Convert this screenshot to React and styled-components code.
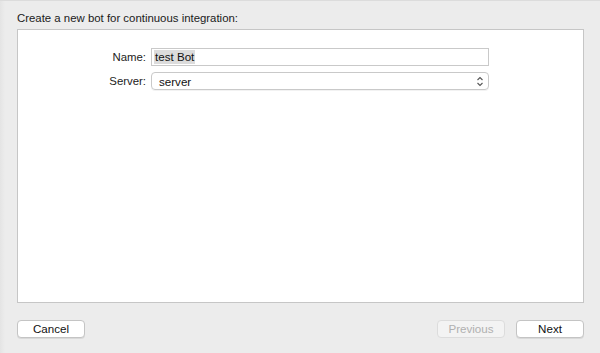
import React from "react";
import styled, { createGlobalStyle } from "styled-components";

const Global = createGlobalStyle`
  html, body {
    margin: 0;
    padding: 0;
  }
  body {
    background: #ececec;
    font-family: "Liberation Sans", Arial, sans-serif;
  }
`;

function App() {
  return (
    <Sheet>
      <Global />
      <Title>Create a new bot for continuous integration:</Title>
      <Panel>
        <Form>
          <Label>Name:</Label>
          <TextField>
            <Selected>test Bot</Selected>
          </TextField>
          <Label>Server:</Label>
          <Select>
            <span>server</span>
            <svg width="8" height="11" viewBox="0 0 8 11">
              <path
                d="M1.5 4 L4 1.5 L6.5 4 M1.5 7 L4 9.5 L6.5 7"
                fill="none"
                stroke="#555"
                strokeWidth="1.1"
              />
            </svg>
          </Select>
        </Form>
      </Panel>
      <Footer>
        <Button>Cancel</Button>
        <Spacer />
        <Button disabled>Previous</Button>
        <Button>Next</Button>
      </Footer>
    </Sheet>
  );
}

const Sheet = styled.div`
  width: 600px;
  height: 353px;
  box-sizing: border-box;
  padding: 10px 16px 0 17px;
  display: flex;
  flex-direction: column;
  background: linear-gradient(to right, #e4e4e4 0, #ececec 5px);
  border-top: 1px solid #dcdcdc;
`;

const Title = styled.div`
  font-size: 11.4px;
  color: #1a1a1a;
  height: 14px;
  line-height: 14px;
  margin-bottom: 4px;
`;

const Panel = styled.div`
  height: 274px;
  box-sizing: border-box;
  background: #ffffff;
  border: 1px solid #c6c6c6;
`;

const Form = styled.div`
  display: grid;
  grid-template-columns: 128px 338px;
  column-gap: 5px;
  row-gap: 6px;
  padding-top: 18px;
  align-items: center;
`;

const Label = styled.div`
  font-size: 11.4px;
  color: #222;
  text-align: right;
`;

const TextField = styled.div`
  height: 18px;
  box-sizing: border-box;
  border: 1px solid #c9c9c9;
  padding: 1px 2px;
  font-size: 11.6px;
  color: #111;
  line-height: 14px;
  display: flex;
  align-items: center;
`;

const Selected = styled.span`
  background: #dcdcdc;
  padding: 0 1px;
`;

const Select = styled.div`
  height: 18px;
  box-sizing: border-box;
  border: 1px solid #c9c9c9;
  border-radius: 4px;
  padding: 0 4px 0 7px;
  font-size: 11.6px;
  color: #111;
  display: flex;
  align-items: center;
  justify-content: space-between;
  box-shadow: 0 1px 0 rgba(0, 0, 0, 0.05);
`;

const Footer = styled.div`
  display: flex;
  gap: 11px;
  margin-top: 17px;
`;

const Spacer = styled.div`
  flex: 1;
`;

const Button = styled.button`
  width: 68px;
  height: 18px;
  padding: 0;
  border: 1px solid #c8c8c8;
  border-radius: 4px;
  background: ${(p) => (p.disabled ? "#f3f3f3" : "#ffffff")};
  color: ${(p) => (p.disabled ? "#b0b0b0" : "#111")};
  border-color: ${(p) => (p.disabled ? "#dcdcdc" : "#c4c4c4")};
  font-family: "Liberation Sans", Arial, sans-serif;
  font-size: 11.6px;
  line-height: 16px;
  box-shadow: ${(p) => (p.disabled ? "none" : "0 1px 0 rgba(0,0,0,0.08)")};
`;

export default App;
